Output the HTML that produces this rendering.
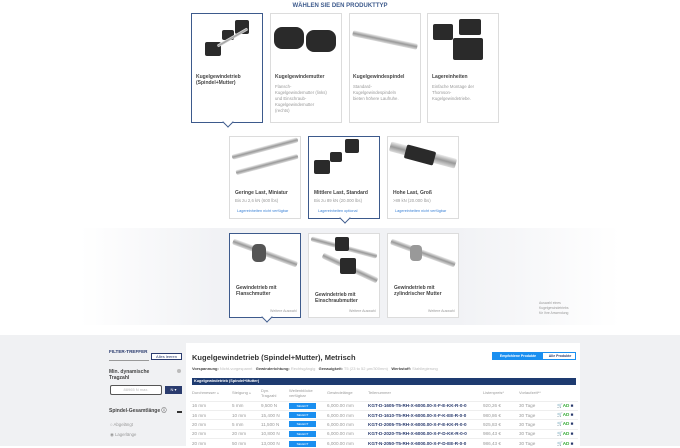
<!DOCTYPE html>
<html><head><meta charset="utf-8"><style>
*{margin:0;padding:0;box-sizing:border-box}
body{width:680px;height:446px;overflow:hidden;background:#fff;font-family:"Liberation Sans",sans-serif;position:relative;color:#333}
.a{position:absolute}
.card{position:absolute;background:#fff;border:1px solid #dcdcdc}
.sel{border:1px solid #3d5a8c}
.t{position:absolute;font-size:5px;font-weight:bold;color:#444;line-height:6px}
.d{position:absolute;font-size:4.3px;color:#999;line-height:6px}
.l{position:absolute;font-size:3.8px;color:#3b82d6}
.arr{position:absolute;width:8px;height:8px;background:#fff;border-right:1px solid #3d5a8c;border-bottom:1px solid #3d5a8c;transform:rotate(45deg)}
.rod{position:absolute;background:linear-gradient(#eee,#999,#ddd);border-radius:2px}
.blk{position:absolute;background:#2a2a2a;border-radius:2px}
table{border-collapse:collapse;font-size:4.6px;color:#999;table-layout:fixed}
td{height:9.4px;padding:0 0 0 2px;white-space:nowrap;border-top:1px solid #eee;overflow:hidden}
.pn{color:#2a3b6e;font-weight:bold}
.sb{display:inline-block;width:27px;height:6px;background:#1a8ff0;color:#fff;font-size:3px;text-align:center;line-height:6px}
</style></head><body>
<div class="a" style="left:0;top:3px;width:680px;text-align:center;font-size:6px;font-weight:bold;color:#3d5a8c">WÄHLEN SIE DEN PRODUKTTYP</div>

<div class="card sel" style="left:191px;top:13px;width:72px;height:110px"></div>
<div class="arr" style="left:224px;top:118px"></div>
<div class="blk" style="left:205px;top:42px;width:16px;height:14px"></div>
<div class="blk" style="left:222px;top:30px;width:12px;height:10px"></div>
<div class="blk" style="left:235px;top:20px;width:14px;height:14px"></div>
<div class="rod" style="left:215px;top:36px;width:35px;height:3px;transform:rotate(-30deg)"></div>
<div class="t" style="left:196px;top:74px">Kugelgewindetrieb<br>(Spindel+Mutter)</div>

<div class="card" style="left:270px;top:13px;width:72px;height:110px"></div>
<div class="blk" style="left:274px;top:27px;width:30px;height:22px;border-radius:8px"></div>
<div class="blk" style="left:306px;top:30px;width:30px;height:22px;border-radius:8px"></div>
<div class="t" style="left:275px;top:74px">Kugelgewindemutter</div>
<div class="d" style="left:275px;top:84px">Flansch-<br>Kugelgewindemutter (links)<br>und Einschraub-<br>Kugelgewindemutter<br>(rechts)</div>

<div class="card" style="left:349px;top:13px;width:72px;height:110px"></div>
<div class="rod" style="left:352px;top:37px;width:66px;height:6px;transform:rotate(12deg)"></div>
<div class="t" style="left:353px;top:74px">Kugelgewindespindel</div>
<div class="d" style="left:353px;top:84px">Standard-<br>Kugelgewindespindeln<br>bieten höhere Laufruhe.</div>

<div class="card" style="left:427px;top:13px;width:72px;height:110px"></div>
<div class="blk" style="left:433px;top:24px;width:20px;height:16px"></div>
<div class="blk" style="left:459px;top:19px;width:22px;height:16px"></div>
<div class="blk" style="left:453px;top:38px;width:30px;height:22px"></div>
<div class="t" style="left:432px;top:74px">Lagereinheiten</div>
<div class="d" style="left:432px;top:84px">Einfache Montage der<br>Thomson-<br>Kugelgewindetriebe.</div>

<div class="card" style="left:229px;top:136px;width:72px;height:83px"></div>
<div class="rod" style="left:231px;top:146px;width:68px;height:5px;transform:rotate(-15deg)"></div>
<div class="rod" style="left:235px;top:162px;width:64px;height:5px;transform:rotate(-15deg)"></div>
<div class="t" style="left:235px;top:190px">Geringe Last, Miniatur</div>
<div class="d" style="left:235px;top:198px">Bis zu 2,6 kN (600 lbs)</div>
<div class="l" style="left:237px;top:209px">Lagereinheiten nicht verfügbar</div>

<div class="card sel" style="left:308px;top:136px;width:72px;height:83px"></div>
<div class="arr" style="left:341px;top:214px"></div>
<div class="blk" style="left:314px;top:160px;width:16px;height:14px"></div>
<div class="blk" style="left:330px;top:152px;width:12px;height:10px"></div>
<div class="blk" style="left:345px;top:139px;width:14px;height:14px"></div>
<div class="t" style="left:314px;top:190px">Mittlere Last, Standard</div>
<div class="d" style="left:314px;top:198px">Bis zu 89 kN (20.000 lbs)</div>
<div class="l" style="left:318px;top:209px">Lagereinheiten optional</div>

<div class="card" style="left:387px;top:136px;width:72px;height:83px"></div>
<div class="rod" style="left:389px;top:150px;width:68px;height:10px;transform:rotate(15deg)"></div>
<div class="blk" style="left:405px;top:148px;width:30px;height:14px;transform:rotate(15deg)"></div>
<div class="t" style="left:393px;top:190px">Hohe Last, Groß</div>
<div class="d" style="left:393px;top:198px">>89 kN (20.000 lbs)</div>
<div class="l" style="left:395px;top:209px">Lagereinheiten nicht verfügbar</div>

<div class="a" style="left:80px;top:228px;width:540px;height:97px;background:linear-gradient(90deg,#fff,#f1f2f5 25%,#f1f2f5 70%,#fff)"></div>
<div class="card sel" style="left:229px;top:233px;width:72px;height:85px"></div>
<div class="arr" style="left:263px;top:313px"></div>
<div class="rod" style="left:231px;top:250px;width:68px;height:6px;transform:rotate(20deg)"></div>
<div class="blk" style="left:252px;top:244px;width:14px;height:18px;background:#555;border-radius:5px"></div>
<div class="t" style="left:236px;top:285px">Gewindetrieb mit<br>Flanschmutter</div>
<div class="d" style="left:270px;top:308px;font-size:3.6px">Weitere Auswahl</div>

<div class="card" style="left:308px;top:233px;width:72px;height:85px"></div>
<div class="rod" style="left:310px;top:245px;width:68px;height:5px;transform:rotate(15deg)"></div>
<div class="rod" style="left:320px;top:265px;width:60px;height:6px;transform:rotate(25deg)"></div>
<div class="blk" style="left:335px;top:237px;width:14px;height:14px"></div>
<div class="blk" style="left:340px;top:258px;width:16px;height:16px"></div>
<div class="t" style="left:315px;top:292px">Gewindetrieb mit<br>Einschraubmutter</div>
<div class="d" style="left:349px;top:308px;font-size:3.6px">Weitere Auswahl</div>

<div class="card" style="left:387px;top:233px;width:72px;height:85px"></div>
<div class="rod" style="left:389px;top:250px;width:68px;height:6px;transform:rotate(20deg)"></div>
<div class="blk" style="left:410px;top:245px;width:12px;height:16px;background:#999;border-radius:4px"></div>
<div class="t" style="left:394px;top:285px">Gewindetrieb mit<br>zylindrischer Mutter</div>
<div class="d" style="left:428px;top:308px;font-size:3.6px">Weitere Auswahl</div>
<div class="d" style="left:539px;top:301px;font-size:3.4px;line-height:5px">Auswahl eines<br>Kugelgewindetriebs<br>für Ihre Anwendung</div>

<div class="a" style="left:0;top:335px;width:680px;height:111px;background:#f0f1f3"></div>
<div class="a" style="left:109px;top:349px;font-size:4.6px;font-weight:bold;color:#2a3b6e">FILTER-TREFFER</div>
<div class="a" style="left:109px;top:360px;width:40px;height:1px;background:#999"></div>
<div class="a" style="left:151px;top:353px;width:31px;height:7px;border:1px solid #2a3b6e;background:#fff;font-size:4px;text-align:center;line-height:5px;color:#2a3b6e">Alles leeren</div>
<div class="a" style="left:109px;top:369px;font-size:5px;font-weight:bold;color:#444;line-height:6px">Min. dynamische<br>Tragzahl</div>
<div class="a" style="left:177px;top:369px;width:4px;height:4px;border-radius:50%;background:#bbb"></div>
<div class="a" style="left:110px;top:385px;width:52px;height:10px;border:1px solid #555;border-radius:2px;background:#fff;font-size:4px;color:#bbb;text-align:center;line-height:8px">88965 N max.</div>
<div class="a" style="left:165px;top:386px;width:17px;height:8px;background:#2a3b6e;color:#fff;font-size:4px;text-align:center;line-height:8px">N ▾</div>
<div class="a" style="left:109px;top:407px;font-size:5px;font-weight:bold;color:#444">Spindel-Gesamtlänge ⓘ</div>
<div class="a" style="left:177px;top:411px;width:5px;height:1.5px;background:#333"></div>
<div class="a" style="left:110px;top:422px;font-size:4.3px;color:#999">○ Abgelängt</div>
<div class="a" style="left:110px;top:432px;font-size:4.3px;color:#999">◉ Lagerlänge</div>

<div class="a" style="left:186px;top:343px;width:394px;height:103px;background:#fff"></div>
<div class="a" style="left:192px;top:353px;font-size:7.5px;font-weight:bold;color:#333">Kugelgewindetrieb (Spindel+Mutter), Metrisch</div>
<div class="a" style="left:492px;top:352px;width:84px;height:8px;border:1px solid #1a8ff0;background:#fff"></div>
<div class="a" style="left:493px;top:353px;width:50px;height:6px;background:#1a8ff0;color:#fff;font-size:3.5px;text-align:center;line-height:6px;font-weight:bold">Empfohlene Produkte</div>
<div class="a" style="left:545px;top:353px;width:30px;height:6px;color:#2a3b6e;font-size:3.5px;text-align:center;line-height:6px;font-weight:bold">Alle Produkte</div>
<div class="a" style="left:192px;top:366px;font-size:4px;color:#bbb;white-space:nowrap"><b style="color:#444">Vorspannung:</b> Nicht-vorgespannt &nbsp; <b style="color:#444">Gewinderichtung:</b> Rechtsgängig &nbsp; <b style="color:#444">Genauigkeit:</b> T5 (23 to 52 µm/300mm) &nbsp; <b style="color:#444">Werkstoff:</b> Stahllegierung</div>
<div class="a" style="left:192px;top:378px;width:384px;height:7px;background:#1e3b70;color:#fff;font-size:3.8px;line-height:7px;padding-left:2px;font-weight:bold">Kugelgewindetrieb (Spindel+Mutter)</div>
<table class="a" style="left:190px;top:385px;width:388px">
<colgroup><col style="width:40px"><col style="width:29px"><col style="width:28px"><col style="width:38px"><col style="width:41px"><col style="width:115px"><col style="width:36px"><col style="width:38px"><col style="width:23px"></colgroup>
<tr style="height:16px;font-size:4px"><td style="border:0">Durchmesser ▵</td><td style="border:0">Steigung ▵</td><td style="border:0">Dyn.<br>Tragzahl</td><td style="border:0">Wellenblöcke<br>verfügbar</td><td style="border:0">Gewindelänge</td><td style="border:0">Teilenummer</td><td style="border:0">Listenpreis*</td><td style="border:0">Vorlaufzeit**</td><td style="border:0"></td></tr>
<tr><td>16 mm</td><td>5 mm</td><td>9,500 N</td><td><span class="sb">SELECT</span></td><td>6,000.00 mm</td><td class="pn">KGT-D-1605-T5-RH-X-6000.00-X-F-E-KK-R-0-0</td><td>920,26 €</td><td>30 Tage</td><td style="color:#e0a000;font-weight:bold">🛒<span style="color:#3a3">AD</span> <span style="color:#2a3b6e">■</span></td></tr>
<tr><td>16 mm</td><td>10 mm</td><td>15,400 N</td><td><span class="sb">SELECT</span></td><td>6,000.00 mm</td><td class="pn">KGT-D-1610-T5-RH-X-6000.00-X-F-K-EE-R-0-0</td><td>980,86 €</td><td>30 Tage</td><td style="color:#e0a000;font-weight:bold">🛒<span style="color:#3a3">AD</span> <span style="color:#2a3b6e">■</span></td></tr>
<tr><td>20 mm</td><td>5 mm</td><td>11,500 N</td><td><span class="sb">SELECT</span></td><td>6,000.00 mm</td><td class="pn">KGT-D-2005-T5-RH-X-6000.00-X-F-E-KK-R-0-0</td><td>925,83 €</td><td>30 Tage</td><td style="color:#e0a000;font-weight:bold">🛒<span style="color:#3a3">AD</span> <span style="color:#2a3b6e">■</span></td></tr>
<tr><td>20 mm</td><td>20 mm</td><td>10,800 N</td><td><span class="sb">SELECT</span></td><td>6,000.00 mm</td><td class="pn">KGT-D-2020-T5-RH-X-6000.00-X-F-D-KK-R-0-0</td><td>986,43 €</td><td>30 Tage</td><td style="color:#e0a000;font-weight:bold">🛒<span style="color:#3a3">AD</span> <span style="color:#2a3b6e">■</span></td></tr>
<tr><td>20 mm</td><td>50 mm</td><td>13,000 N</td><td><span class="sb">SELECT</span></td><td>6,000.00 mm</td><td class="pn">KGT-N-2050-T5-RH-X-6000.00-X-F-D-EE-R-0-0</td><td>986,43 €</td><td>30 Tage</td><td style="color:#e0a000;font-weight:bold">🛒<span style="color:#3a3">AD</span> <span style="color:#2a3b6e">■</span></td></tr>
</table>
</body></html>
